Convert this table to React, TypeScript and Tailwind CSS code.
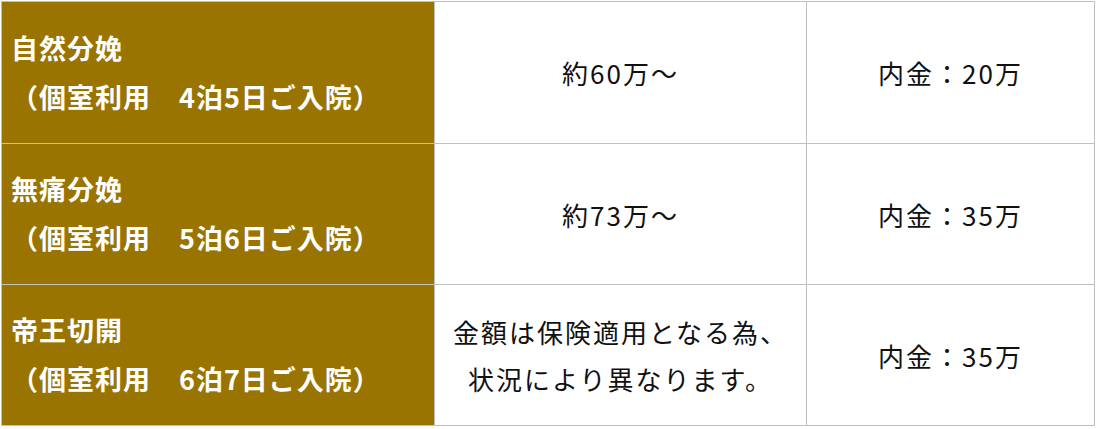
import React from 'react';

type Row = {
  name: string;
  stay: string;
  price: string[];
  deposit: string;
};

const rows: Row[] = [
  { name: '自然分娩', stay: '（個室利用　4泊5日ご入院）', price: ['約60万～'], deposit: '内金：20万' },
  { name: '無痛分娩', stay: '（個室利用　5泊6日ご入院）', price: ['約73万～'], deposit: '内金：35万' },
  {
    name: '帝王切開',
    stay: '（個室利用　6泊7日ご入院）',
    price: ['金額は保険適用となる為、', '状況により異なります。'],
    deposit: '内金：35万',
  },
];

const font = { fontFamily: '"Noto Sans CJK JP", "Noto Sans", sans-serif' };

const App = () => {
  return (
    <div className="w-[1098px] h-[429px] bg-white pt-px pl-px" style={font}>
      <div className="grid grid-cols-[432px_371px_287px] grid-rows-[141px_140px_140px] gap-px p-px bg-[#c0c0c0] w-fit">
        {rows.map((row) => (
          <React.Fragment key={row.name}>
            <div className="bg-[#9a7400] flex flex-col justify-center pl-[9px] pb-[2px] text-white font-bold text-[27px] leading-[49px] tracking-[1px]">
              <div>{row.name}</div>
              <div>{row.stay}</div>
            </div>
            <div className="bg-white flex flex-col items-center justify-center text-[#111] text-[26px] leading-[47px] tracking-[2px]">
              {row.price.map((line) => (
                <div key={line}>{line}</div>
              ))}
            </div>
            <div className="bg-white flex items-center justify-center text-[#111] text-[26px] tracking-[2px]">
              {row.deposit}
            </div>
          </React.Fragment>
        ))}
      </div>
    </div>
  );
};

export default App;
